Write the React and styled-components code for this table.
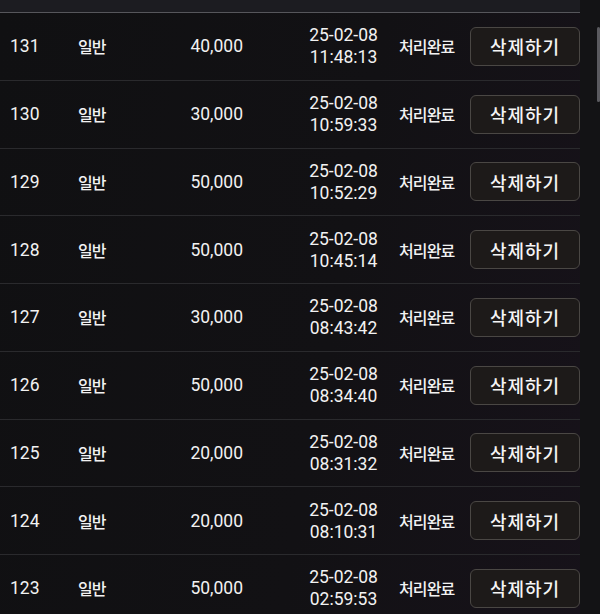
import React from 'react';
import styled, { createGlobalStyle } from 'styled-components';

const rows = [
  { id: 131, amount: '40,000', date: '25-02-08', time: '11:48:13' },
  { id: 130, amount: '30,000', date: '25-02-08', time: '10:59:33' },
  { id: 129, amount: '50,000', date: '25-02-08', time: '10:52:29' },
  { id: 128, amount: '50,000', date: '25-02-08', time: '10:45:14' },
  { id: 127, amount: '30,000', date: '25-02-08', time: '08:43:42' },
  { id: 126, amount: '50,000', date: '25-02-08', time: '08:34:40' },
  { id: 125, amount: '20,000', date: '25-02-08', time: '08:31:32' },
  { id: 124, amount: '20,000', date: '25-02-08', time: '08:10:31' },
  { id: 123, amount: '50,000', date: '25-02-08', time: '02:59:53' },
];

const GlobalStyle = createGlobalStyle`
  html, body {
    margin: 0;
    padding: 0;
    background: #111113;
    overflow: hidden;
  }
  body {
    font-family: Roboto, "Noto Sans CJK KR", sans-serif;
    color: #f2f2f2;
  }
`;

const App = () => {
  return (
    <>
      <GlobalStyle />
      <Page>
        <Table>
          <HeaderStrip />
          {rows.map((r) => (
            <Row key={r.id}>
              <Num>{r.id}</Num>
              <Label>일반</Label>
              <Amount>{r.amount}</Amount>
              <DateCell>
                <span>{r.date}</span>
                <span>{r.time}</span>
              </DateCell>
              <Label>처리완료</Label>
              <DeleteButton>삭제하기</DeleteButton>
            </Row>
          ))}
        </Table>
        <Scrollbar>
          <Thumb />
        </Scrollbar>
      </Page>
    </>
  );
};

export default App;

const Page = styled.div`
  display: flex;
  width: 600px;
  height: 614px;
  overflow: hidden;
  background: linear-gradient(100deg, #101012 0%, #121114 55%, #17121a 100%);
`;

const Table = styled.div`
  width: 580px;
  flex-shrink: 0;
  display: flex;
  flex-direction: column;
`;

const HeaderStrip = styled.div`
  height: 12px;
  flex-shrink: 0;
  background: #1c1c21;
  border-bottom: 1px solid #56565b;
`;

const Row = styled.div`
  height: 67.75px;
  flex-shrink: 0;
  box-sizing: border-box;
  border-bottom: 1px solid #2a2a2d;
  display: grid;
  grid-template-columns: 68px 95px 70px 156px 71px 110px;
  align-items: center;
  padding-left: 10px;
`;

const Num = styled.div`
  font-family: Roboto, sans-serif;
  font-size: 17.5px;
  white-space: nowrap;
`;

const Amount = styled(Num)`
  text-align: right;
`;

const Label = styled.div`
  font-family: "Noto Sans CJK KR", sans-serif;
  font-size: 16px;
  font-weight: 500;
  letter-spacing: -0.9px;
  white-space: nowrap;
`;

const DateCell = styled.div`
  display: flex;
  flex-direction: column;
  align-items: center;
  padding-left: 45px;
  line-height: 22px;
  font-family: Roboto, sans-serif;
  font-size: 17.5px;
`;

const DeleteButton = styled.button`
  width: 110px;
  height: 39px;
  box-sizing: border-box;
  background: #1d1a19;
  border: 1.5px solid #4a4744;
  border-radius: 6px;
  color: #f5f5f5;
  font-family: "Noto Sans CJK KR", sans-serif;
  font-size: 18px;
  font-weight: 500;
  letter-spacing: 1px;
  padding: 0;
  cursor: pointer;
`;

const Scrollbar = styled.div`
  position: relative;
  flex: 1;
  background: #131315;
`;

const Thumb = styled.div`
  position: absolute;
  right: 0;
  top: 27px;
  width: 3px;
  height: 75px;
  background: #5a5a5f;
  border-radius: 2px;
`;
